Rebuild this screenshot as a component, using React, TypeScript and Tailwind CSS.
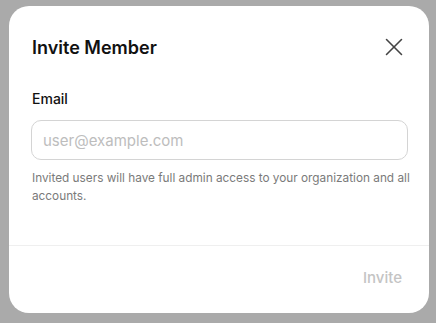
import { X } from 'lucide-react';

export default function App() {
  return (
    <div className="h-[323px] w-[436px] bg-[#aaaaaa] pl-[9px] pt-[6px] font-['Inter',sans-serif]">
      <div className="flex h-[307px] w-[420px] flex-col overflow-hidden rounded-[20px] bg-white">
        <div className="flex items-start justify-between pl-[23px] pr-[20px] pt-[30px]">
          <h2 className="text-[18px] font-semibold leading-[24px] text-[#111]">Invite Member</h2>
          <button className="mt-[-1.5px] flex h-[24px] w-[30px] items-center justify-center text-[#444]">
            <X className="h-[30px] w-[30px] shrink-0" strokeWidth={1.25} />
          </button>
        </div>

        <div className="flex-1 px-[22px] pt-[29px]">
          <label className="block pl-[1px] text-[14px] font-medium leading-[20px] text-[#111]">Email</label>
          <input
            placeholder="user@example.com"
            className="mt-[11px] h-[40px] w-[377px] rounded-[10px] border border-[#d4d4d4] px-[11px] text-[15px] text-[#111] outline-none placeholder:text-[#bdbdbd]"
          />
          <p className="mr-[-20px] mt-[9px] pl-[1px] text-[11.8px] leading-[18px] text-[#7a7a7a]">
            Invited users will have full admin access to your organization and all accounts.
          </p>
        </div>

        <div className="flex h-[68px] items-center justify-end border-t border-[#efefef] pb-[2px] pr-[27px]">
          <button className="text-[15px] font-medium text-[#c4c4c4]">Invite</button>
        </div>
      </div>
    </div>
  );
}
